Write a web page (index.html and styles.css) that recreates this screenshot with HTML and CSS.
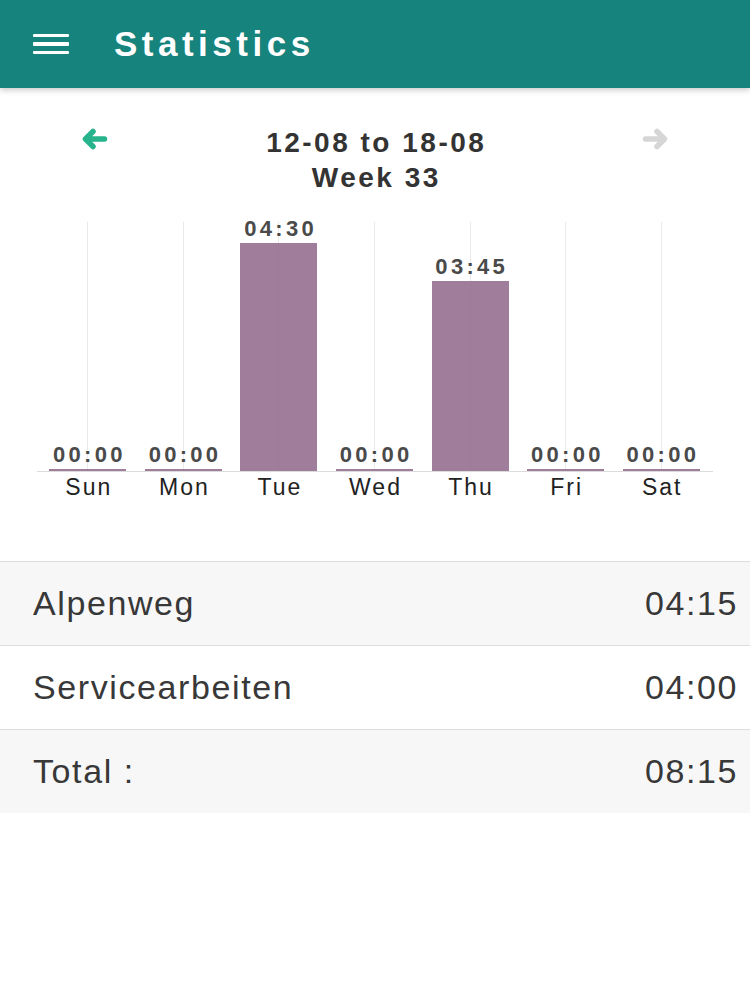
FILE: index.html
```html
<!DOCTYPE html>
<html lang="en">
<head>
<meta charset="utf-8">
<title>Statistics</title>
<link rel="stylesheet" href="styles.css">
</head>
<body>
<header class="appbar">
  <div class="menu"><span></span><span></span><span></span></div>
  <h1 class="title">Statistics</h1>
</header>

<section class="week">
  <div class="nav prev">
    <svg viewBox="0 0 26 22" width="26" height="22"><path d="M11 3.5 L3.5 11 L11 18.5 M3.5 11 L22.5 11" fill="none" stroke="#27b38c" stroke-width="5.5" stroke-linecap="round" stroke-linejoin="round"/></svg>
  </div>
  <div class="range">
    <div>12-08 to 18-08</div>
    <div>Week 33</div>
  </div>
  <div class="nav next">
    <svg viewBox="0 0 26 22" width="26" height="22"><path d="M15 3.5 L22.5 11 L15 18.5 M22.5 11 L3.5 11" fill="none" stroke="#d6d6d6" stroke-width="5.5" stroke-linecap="round" stroke-linejoin="round"/></svg>
  </div>
</section>

<section class="chart">
  <div class="plot">
    <div class="col"><span class="val">00:00</span><div class="bar" style="height:2px"></div></div>
    <div class="col"><span class="val">00:00</span><div class="bar" style="height:2px"></div></div>
    <div class="col"><span class="val">04:30</span><div class="bar" style="height:228px"></div></div>
    <div class="col"><span class="val">00:00</span><div class="bar" style="height:2px"></div></div>
    <div class="col"><span class="val">03:45</span><div class="bar" style="height:190px"></div></div>
    <div class="col"><span class="val">00:00</span><div class="bar" style="height:2px"></div></div>
    <div class="col"><span class="val">00:00</span><div class="bar" style="height:2px"></div></div>
  </div>
  <div class="days">
    <span>Sun</span><span>Mon</span><span>Tue</span><span>Wed</span><span>Thu</span><span>Fri</span><span>Sat</span>
  </div>
</section>

<ul class="list">
  <li class="row"><span>Alpenweg</span><span>04:15</span></li>
  <li class="row"><span>Servicearbeiten</span><span>04:00</span></li>
  <li class="row"><span>Total :</span><span>08:15</span></li>
</ul>
</body>
</html>
```

FILE: styles.css
```css
html, body {
  margin: 0;
  padding: 0;
  background: #ffffff;
  font-family: "Liberation Sans", Arial, Helvetica, sans-serif;
}

.appbar {
  height: 88px;
  background: #17837d;
  display: flex;
  align-items: center;
  padding-left: 33px;
  box-shadow: 0 2px 6px rgba(0, 0, 0, 0.22);
  position: relative;
  z-index: 1;
}

.menu {
  display: flex;
  flex-direction: column;
  gap: 5px;
  width: 36px;
}

.menu span {
  display: block;
  height: 3.5px;
  background: #ffffff;
  border-radius: 1px;
}

.title {
  margin: 0 0 0 45px;
  color: #ffffff;
  font-size: 35px;
  font-weight: 700;
  letter-spacing: 4.5px;
  line-height: 40px;
}

.week {
  display: flex;
  justify-content: space-between;
  align-items: flex-start;
  padding: 37px 82px 0 82px;
}

.nav {
  width: 26px;
  height: 22px;
  margin-top: 3px;
}

.nav svg {
  display: block;
}

.range {
  text-align: center;
  font-size: 28px;
  font-weight: 700;
  letter-spacing: 2.5px;
  line-height: 35px;
  color: #333333;
  padding-left: 2.5px;
}

.chart {
  margin: 27px 37px 0 37px;
}

.plot {
  display: flex;
  height: 249px;
  padding: 0 4px 0 3px;
  border-bottom: 1px solid #dcdcdc;
}

.col {
  flex: 1;
  display: flex;
  flex-direction: column;
  justify-content: flex-end;
  align-items: center;
  background: linear-gradient(#e9e9e9, #e9e9e9) no-repeat center / 1px 100%;
}

.val {
  flex-shrink: 0;
  font-size: 22px;
  font-weight: 700;
  letter-spacing: 3.3px;
  padding-left: 3.3px;
  line-height: 24px;
  color: #4a4a4a;
  margin-bottom: 2px;
}

.bar {
  flex-shrink: 0;
  width: 77px;
  background: rgba(150, 112, 144, 0.9);
}

.days {
  display: flex;
  padding: 0 4px 0 3px;
  margin-top: 2px;
}

.days span {
  flex: 1;
  text-align: center;
  font-size: 23px;
  letter-spacing: 2px;
  padding-left: 2px;
  line-height: 26px;
  color: #222222;
}

.list {
  list-style: none;
  margin: 61px 0 0 0;
  padding: 0;
  border-top: 1px solid #dddddd;
}

.row {
  display: flex;
  justify-content: space-between;
  align-items: center;
  height: 83px;
  padding: 0 12px 0 33px;
  font-size: 34px;
  letter-spacing: 1.6px;
  color: #383838;
  border-bottom: 1px solid #dddddd;
}

.row:nth-child(odd) {
  background: #f7f7f8;
}

.row:last-child {
  border-bottom: none;
}
```
